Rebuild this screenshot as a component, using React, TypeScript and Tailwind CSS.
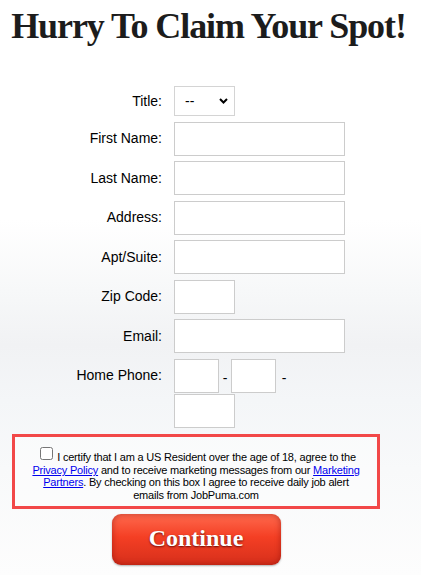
import { ChangeEvent, useState } from 'react'

const rows = [
  { label: 'First Name:', width: 'w-[171px]' },
  { label: 'Last Name:', width: 'w-[171px]' },
  { label: 'Address:', width: 'w-[171px]' },
  { label: 'Apt/Suite:', width: 'w-[171px]' },
  { label: 'Zip Code:', width: 'w-[61px]' },
  { label: 'Email:', width: 'w-[171px]' },
]

const box = 'h-[34px] border border-[#cccccc] bg-white px-1 text-[14px] outline-none'

export default function App() {
  const [title, setTitle] = useState('--')
  const [agree, setAgree] = useState(false)

  return (
    <div className="min-h-[575px] w-[421px] bg-[linear-gradient(to_bottom,#ffffff_0px,#ffffff_220px,#f7f8f9_290px,#f1f2f4_345px,#f4f6f8_400px,#f8f9fa_470px,#fdfdfd_575px)] font-['Liberation_Sans',Arial,sans-serif] text-black">
      {/* HEADER */}
      <h1 className="pt-[8px] pr-[4px] text-center font-['Liberation_Serif','Times_New_Roman',serif] text-[36px] leading-[36px] font-bold tracking-[-1.1px] text-[#1c1c1c]">
        Hurry To Claim Your Spot!
      </h1>

      <div className="w-[392px]">
        {/* FORM */}
        <div className="mt-[42px] grid grid-cols-[162px_1fr] items-center gap-x-3 gap-y-[5.5px] text-[14px]">
          <label className="text-right">Title:</label>
          <div className="relative h-[30px] w-[61px]">
            <select
              value={title}
              onChange={(e: ChangeEvent<HTMLSelectElement>) => setTitle(e.target.value)}
              className="h-full w-full appearance-none border border-[#d4d4d4] bg-white pl-[10px] text-[14px] outline-none"
            >
              <option>--</option>
              <option>Mr.</option>
              <option>Mrs.</option>
              <option>Ms.</option>
            </select>
            <svg
              className="pointer-events-none absolute top-[12px] right-[7px]"
              width="9"
              height="6"
              viewBox="0 0 9 6"
            >
              <path d="M1 1l3.5 3.5L8 1" fill="none" stroke="#000" strokeWidth="2" />
            </svg>
          </div>

          {rows.map((row) => (
            <div key={row.label} className="contents">
              <label className="text-right">{row.label}</label>
              <input className={`${box} ${row.width}`} />
            </div>
          ))}

          <label className="flex h-[34px] items-center justify-end self-start">Home Phone:</label>
          <div className="flex w-[171px] flex-wrap items-center gap-y-px">
            <input className={`${box} w-[45px]`} />
            <span className="w-3 pt-[5px] text-center">-</span>
            <input className={`${box} w-[45px]`} />
            <span className="w-4 pt-[5px] text-center">-</span>
            <input className={`${box} w-[61px]`} />
          </div>
        </div>

        {/* CONSENT */}
        <div className="mx-3 mt-[6px] border-[3px] border-[#f24848] bg-white/40 px-2 pt-[14px] pb-[5px] text-center text-[11px] leading-[12.2px] tracking-[-0.2px]">
          <input
            type="checkbox"
            checked={agree}
            onChange={() => setAgree(!agree)}
            className="relative -top-[4px] my-0 mr-[4px] ml-[4px] h-[13px] w-[13px] align-middle"
          />
          I certify that I am a US Resident over the age of 18, agree to the
          <br />
          <a href="#" className="text-[#0000ee] underline">
            Privacy Policy
          </a>{' '}
          and to receive marketing messages from our{' '}
          <a href="#" className="text-[#0000ee] underline">
            Marketing
            <br />
            Partners
          </a>
          . By checking on this box I agree to receive daily job alert
          <br />
          emails from JobPuma.com
        </div>

        {/* SUBMIT */}
        <div className="mt-[5px] flex justify-center">
          <button className="flex h-[51px] w-[169px] items-center justify-center rounded-[9px] bg-[linear-gradient(to_bottom,#ff6a4e,#f43f24_45%,#d62f1b)] pb-[2px] font-['Liberation_Serif','Times_New_Roman',serif] text-[24px] font-bold text-white shadow-[inset_0_0_6px_rgba(110,0,0,0.45),0_1px_2px_rgba(0,0,0,0.3)] [text-shadow:0_1px_2px_rgba(70,0,0,0.8)]">
            Continue
          </button>
        </div>
      </div>
    </div>
  )
}
